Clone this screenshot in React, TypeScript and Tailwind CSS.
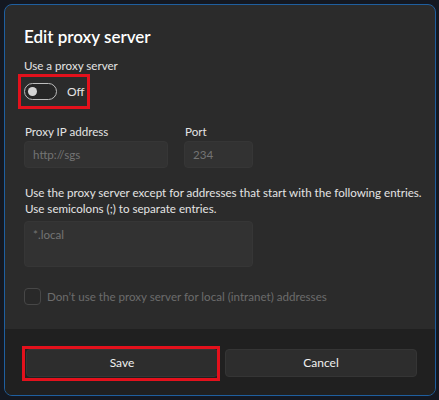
export default function App() {
  return (
    <div
      className="w-[439px] h-[400px] bg-[#141821] p-[4px]"
      style={{ fontFamily: "Lato, 'Noto Sans', sans-serif" }}
    >
      <div className="h-[392px] w-[432px] rounded-[8px] border border-[#1f5f9f] bg-[#2b2b2b] overflow-hidden flex flex-col">
        {/* Body */}
        <div className="flex-1 pl-[19px] pr-[18px] pt-[22px]">
          <h1 className="text-[17px] leading-[20px] font-semibold text-white">Edit proxy server</h1>

          <p className="mt-[11px] text-[11.6px] leading-[16px] text-[#e4e4e4]">Use a proxy server</p>

          {/* Toggle */}
          <div className="relative flex items-center h-[35px]">
            <div className="absolute -left-[6px] top-0 w-[72px] h-[35px] border-[3px] border-[#e3111c]" />
            <div className="w-[33px] h-[17px] rounded-full border border-[#bdbdbd] bg-[#262626] flex items-center pl-[3px]">
              <div className="w-[9px] h-[9px] rounded-full bg-[#d4d4d4]" />
            </div>
            <span className="ml-[10px] text-[12px] text-[#e4e4e4]">Off</span>
          </div>

          {/* IP / Port */}
          <div className="mt-[15px] flex gap-[16px]">
            <div className="flex flex-col">
              <label className="text-[11.6px] leading-[16px] text-[#e4e4e4] pl-[1px]">Proxy IP address</label>
              <div className="mt-[1px] w-[144px] h-[27px] rounded-[4px] bg-[#323232] border border-[#363636] flex items-center pl-[8px] text-[11.6px] text-[#747474]">
                http://sgs
              </div>
            </div>
            <div className="flex flex-col">
              <label className="text-[11.6px] leading-[16px] text-[#e4e4e4] pl-[1px]">Port</label>
              <div className="mt-[1px] w-[69px] h-[27px] rounded-[4px] bg-[#323232] border border-[#363636] flex items-center pl-[8px] text-[11.6px] text-[#747474]">
                234
              </div>
            </div>
          </div>

          <p className="mt-[17px] pl-[1px] text-[11.6px] leading-[16px] text-[#e4e4e4] whitespace-nowrap">
            Use the proxy server except for addresses that start with the following entries.
            <br />
            Use semicolons (;) to separate entries.
          </p>

          <div className="mt-[4px] w-[229px] h-[46px] rounded-[4px] bg-[#323232] border border-[#363636] pl-[8px] pt-[5px] text-[11.6px] leading-[16px] text-[#747474]">
            *.local
          </div>

          {/* Checkbox */}
          <div className="mt-[21px] flex items-center gap-[6px]">
            <div className="w-[17px] h-[17px] rounded-[4px] border border-[#474747] bg-[#292929]" />
            <span className="text-[11.6px] text-[#6c6c6c]">Don’t use the proxy server for local (intranet) addresses</span>
          </div>
        </div>

        {/* Footer */}
        <div className="h-[66px] bg-[#202020] grid grid-cols-2 gap-[7px] pl-[21px] pr-[18px] pt-[20px] pb-[18px]">
          <div className="relative">
            <button className="w-full h-[28px] rounded-[4px] bg-[#2d2d2d] border border-[#353535] text-[12px] text-[#f0f0f0]">
              Save
            </button>
            <div className="absolute -left-[4px] -right-[2px] -top-[3px] -bottom-[4px] border-[3px] border-[#e3111c]" />
          </div>
          <button className="w-full h-[28px] rounded-[4px] bg-[#2d2d2d] border border-[#353535] text-[12px] text-[#f0f0f0]">
            Cancel
          </button>
        </div>
      </div>
    </div>
  );
}
